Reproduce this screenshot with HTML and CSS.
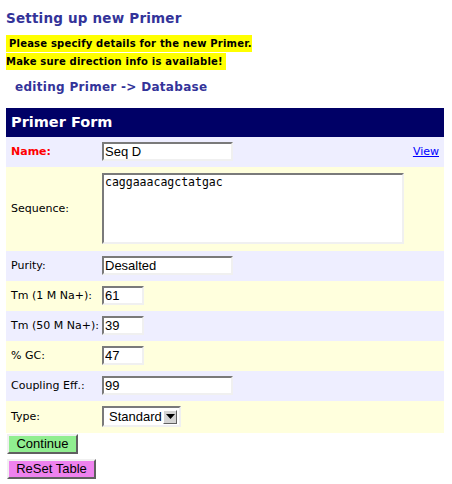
FILE: index.html
```html
<!DOCTYPE html>
<html lang="en">
<head>
    <meta charset="UTF-8">
    <title>Setting up new Primer</title>
    <link rel="stylesheet" href="styles.css">
</head>
<body>
    <h2 class="page-title">Setting up new Primer</h2>
    <div class="notice">
        <span class="hilite">Please specify details for the new Primer.<br>Make sure direction info is available!</span>
    </div>
    <h3 class="crumb">editing Primer -&gt; Database</h3>

    <form>
        <table class="form-table">
            <tr class="head">
                <th colspan="3">Primer Form</th>
            </tr>
            <tr class="row-a">
                <td class="label required">Name:</td>
                <td><input type="text" class="txt wide" value="Seq D"></td>
                <td class="extra"><a href="#">View</a></td>
            </tr>
            <tr class="row-b tall">
                <td class="label">Sequence:</td>
                <td colspan="2"><textarea class="seq">caggaaacagctatgac</textarea></td>
            </tr>
            <tr class="row-a">
                <td class="label">Purity:</td>
                <td colspan="2"><input type="text" class="txt wide" value="Desalted"></td>
            </tr>
            <tr class="row-b">
                <td class="label">Tm (1 M Na+):</td>
                <td colspan="2"><input type="text" class="txt short" value="61"></td>
            </tr>
            <tr class="row-a">
                <td class="label">Tm (50 M Na+):</td>
                <td colspan="2"><input type="text" class="txt short" value="39"></td>
            </tr>
            <tr class="row-b">
                <td class="label">% GC:</td>
                <td colspan="2"><input type="text" class="txt short" value="47"></td>
            </tr>
            <tr class="row-a">
                <td class="label">Coupling Eff.:</td>
                <td colspan="2"><input type="text" class="txt wide" value="99"></td>
            </tr>
            <tr class="row-b">
                <td class="label">Type:</td>
                <td colspan="2">
                    <div class="fake-select">
                        <span class="sel-text">Standard</span>
                        <span class="sel-btn"><svg width="9" height="5" viewBox="0 0 9 5"><path d="M0 0h9L4.5 5z" fill="#000"/></svg></span>
                    </div>
                </td>
            </tr>
        </table>
        <div class="actions">
            <button type="button" class="btn go">Continue</button>
            <button type="button" class="btn reset">ReSet Table</button>
        </div>
    </form>
</body>
</html>
```

FILE: styles.css
```css
body {
    margin: 0;
    padding: 6px;
    background: #fff;
    font-family: "DejaVu Sans", Verdana, sans-serif;
    color: #000;
}
.page-title {
    margin: 0;
    padding-top: 2px;
    font-size: 13.5px;
    line-height: 20px;
    color: #333399;
    letter-spacing: 0.2px;
}
.notice {
    margin-top: 7px;
    font-size: 10px;
    line-height: 17.5px;
}
.hilite {
    background: #ffff00;
    font-weight: bold;
    letter-spacing: 0.2px;
    padding: 3px 3px;
}
.crumb {
    margin: 8px 0 0 9px;
    font-size: 12px;
    line-height: 18px;
    color: #333399;
    letter-spacing: 0.3px;
}
.form-table {
    margin-top: 12px;
    width: 438px;
    border-collapse: collapse;
    font-size: 11px;
}
.form-table td {
    padding: 5px 0 6px;
    vertical-align: middle;
}
.head th {
    background: #000066;
    color: #fff;
    text-align: left;
    font-size: 14.5px;
    padding: 4px 5px 5px;
    line-height: 20px;
}
.row-a { background: #eeeeff; }
.row-b { background: #ffffdd; }
.label {
    width: 91px;
    padding-left: 5px !important;
}
.required {
    color: #ff0000;
    font-weight: bold;
}
.extra {
    text-align: right;
    padding-right: 5px !important;
}
.extra a {
    color: #0000ff;
}
.txt, .seq {
    box-sizing: border-box;
    border: 2px solid;
    border-color: #7a7a7a #f0f0f0 #f0f0f0 #7a7a7a;
    background: #fff;
    font-family: "Liberation Sans", Arial, sans-serif;
    font-size: 13px;
    padding: 0 1px;
    height: 19px;
    margin: 0;
    display: block;
}
.wide { width: 131px; }
.short { width: 42px; }
.tall td { padding: 6px 0 7px; }
.seq {
    width: 302px;
    height: 71px;
    resize: none;
    font-family: "DejaVu Sans Mono", monospace;
    font-size: 11.5px;
    padding: 0 1px;
    line-height: 14px;
}
.fake-select {
    box-sizing: border-box;
    display: flex;
    align-items: center;
    width: 79px;
    height: 21px;
    border: 2px solid;
    border-color: #7a7a7a #f0f0f0 #f0f0f0 #7a7a7a;
    background: #fff;
    font-family: "Liberation Sans", Arial, sans-serif;
    font-size: 13px;
}
.sel-text {
    flex: 1;
    padding-left: 5px;
}
.sel-btn {
    box-sizing: border-box;
    width: 14px;
    height: 14px;
    margin-right: 2px;
    background: #d4d4d4;
    border: 1px solid;
    border-color: #fff #606060 #606060 #fff;
    display: flex;
    align-items: center;
    justify-content: center;
}
.actions {
    padding: 1px 1px;
}
.btn {
    display: block;
    font-family: "Liberation Sans", Arial, sans-serif;
    font-size: 13px;
    height: 20px;
    padding: 0 7px;
    border: 2px solid;
    border-color: #f0f0f0 #606060 #606060 #f0f0f0;
    margin-bottom: 5px;
    line-height: 14px;
}
.go { background: #90ee90; width: 71px; }
.reset { background: #ee82ee; width: 89px; }
```
